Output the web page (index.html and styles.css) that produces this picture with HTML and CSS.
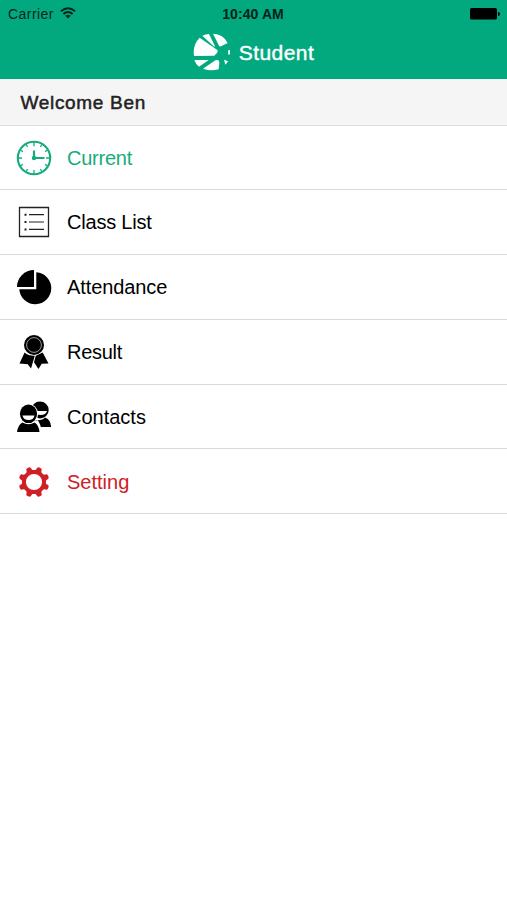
FILE: index.html
```html
<!DOCTYPE html>
<html lang="en">
<head>
<meta charset="utf-8">
<title>Student</title>
<link rel="stylesheet" href="styles.css">
</head>
<body>
<header class="header">
  <div class="status">
    <div class="status-left"><span class="carrier">Carrier</span>
      <svg class="wifi" width="16" height="12" viewBox="0 0 16 12" fill="none" stroke="#05261b" stroke-width="1.9"><path d="M1 4.2Q8-1.8 15 4.2M3.4 7Q8 3 12.6 7"/><path d="M8 11.5 5.2 8.8Q8 6.5 10.8 8.8Z" fill="#05261b" stroke="none"/></svg>
    </div>
    <span class="time">10:40 AM</span>
    <svg class="battery" width="30" height="12" viewBox="0 0 30 12"><rect width="27" height="11.5" rx="1.5"/><path d="M28 4q2 0 2 2t-2 2z"/></svg>
  </div>
  <div class="brand">
    <svg width="38" height="38" viewBox="39 99 114 114" fill="#fff"><path d="M59 113 112 150Q115 154 110 160L103 167 42 168Q37 135 59 113Z"/><path d="M67 107Q77 102 87 102L105 139Q104 141 100 138Z"/><path d="M99 101Q130 102 143 129L123 139Q118 141 116 135Z"/><path d="M43 180H86L57 200Q47 192 43 180Z"/><path d="M69 206 106 181Q118 177 118 188L116 208Q91 215 69 206Z"/><path d="M132 179 144 184Q140 191 136 194ZM144 152 150 149V163L145 164Z"/></svg>
    <h1 class="title">Student</h1>
  </div>
</header>
<div class="welcome"><span class="welcome-text">Welcome Ben</span></div>
<ul class="menu">
  <li class="row current">
    <svg class="icon" viewBox="0 0 36 36" fill="none" stroke="currentColor"><circle cx="18" cy="18" r="16.2" stroke-width="2.1"/><path stroke-width="1.3" d="M18 2v4.2M18 30v4M2 18h4M30 18h4M10 4.2l1.6 2.8M26 4.2 24.4 7M10 31.8l1.6-2.8M26 31.8 24.4 29M4.2 10l2.8 1.6M31.8 10 29 11.6M4.2 26 7 24.4M31.8 26 29 24.4"/><path stroke-width="2.2" d="M18 10.5V18h10.5"/><circle cx="18" cy="18" r="2.2" fill="currentColor" stroke="none"/></svg>
    <span class="label l1">Current</span></li>
  <li class="row">
    <svg class="icon" viewBox="0 0 36 36" fill="none" stroke="#222"><path stroke-width="1.3" d="M3.5 3.5h29v29h-29z"/><path stroke-width="1.2" d="M13 10.7h15M13 18h15M13 25.4h15"/><path stroke-width="2" d="M8.5 10.7h2M8.5 18h2M8.5 25.4h2"/></svg>
    <span class="label l2">Class List</span></li>
  <li class="row">
    <svg class="icon" viewBox="0 0 36 36" fill="currentColor"><path d="M18 18H1A17 17 0 0 1 18 1Z"/><path d="M20.3 3.3A16 16 0 1 1 3.3 20.3H20.3Z"/></svg>
    <span class="label l3">Attendance</span></li>
  <li class="row">
    <svg class="icon" viewBox="0 0 36 36" fill="currentColor"><path d="M8.6 18.5Q12.5 22 18.8 21.8L15 34.5 11.8 30.2 3.5 29.5ZM19.8 21.8 26.7 18.5 32.5 29.5 25.8 29.7 22.4 35 18 28.3Z"/><circle cx="18" cy="11" r="10"/><circle cx="18" cy="11" r="7.4" fill="none" stroke="#aaa" stroke-width=".9"/></svg>
    <span class="label l4">Result</span></li>
  <li class="row">
    <svg class="icon" viewBox="0 0 36 36" fill="currentColor"><ellipse cx="24" cy="11" rx="8.7" ry="8.5"/><path d="M18 12H31Q30 16 24.5 16 20 16 18 12Z" fill="#fff"/><path d="M19 21Q26 22 29 18.5 34.5 20 35.2 28H22Z"/><ellipse cx="12.5" cy="15" rx="9.6" ry="10.2" fill="#fff"/><path d="M4 21Q13 27 21.5 21 25 25 26 34H-1Z" fill="#fff"/><ellipse cx="12.5" cy="14.8" rx="8.6" ry="9.3"/><path d="M6.5 16.5H18.5Q17.5 21 12.5 21 7.5 21 6.5 16.5Z" fill="#fff"/><path d="M6.2 23.5Q12.5 27 18.8 23.5 23 26.5 23.5 33H1Q1.7 26.5 6.2 23.5Z"/></svg>
    <span class="label l5">Contacts</span></li>
  <li class="row setting">
    <svg class="icon" viewBox="-18 -18 36 36" fill="currentColor"><circle r="10" fill="none" stroke="currentColor" stroke-width="3.8"/><g transform="rotate(22.5)"><path id="tooth" d="M-4.6-10.4Q-2.3-11.8-2.5-14.2-2.2-15.5 0-15.5T2.5-14.2Q2.3-11.8 4.6-10.4Z"/><use href="#tooth" transform="rotate(45)"/><use href="#tooth" transform="rotate(90)"/><use href="#tooth" transform="rotate(135)"/><use href="#tooth" transform="rotate(180)"/><use href="#tooth" transform="rotate(225)"/><use href="#tooth" transform="rotate(270)"/><use href="#tooth" transform="rotate(315)"/></g></svg>
    <span class="label l6">Setting</span></li>
</ul>
</body>
</html>
```
FILE: styles.css
```css
* { box-sizing: border-box; }
body {
  margin: 0;
  background: #fff;
  color: #000;
  font-family: "Liberation Sans", Arial, sans-serif;
}
.header {
  height: 79px;
  background: #02a97f;
}
.status {
  display: grid;
  grid-template-columns: 1fr auto 1fr;
  align-items: center;
  height: 28px;
  padding: 0 7px 0 8px;
  font-size: 14px;
  color: #05261b;
}
.status-left { display: flex; align-items: center; gap: 6px; }
.carrier { letter-spacing: 0.45px; }
.wifi { margin-top: -2px; }
.time {
  margin-right: 2px;
  font-weight: bold;
  letter-spacing: 0.1px;
  color: #032219;
}
.battery { justify-self: end; }
.brand {
  display: flex;
  align-items: center;
  justify-content: center;
  gap: 8px;
  height: 48px;
}
.title {
  margin: 0;
  padding-top: 1px;
  color: #fff;
  font-size: 21px;
  font-weight: normal;
  letter-spacing: 0.45px;
  -webkit-text-stroke: 0.4px #fff;
}
.welcome {
  display: flex;
  align-items: center;
  height: 46.5px;
  padding: 3px 0 0 20.5px;
  background: #f5f5f5;
  border-bottom: 1px solid #dedede;
}
.welcome-text {
  font-size: 19px;
  letter-spacing: 0.68px;
  color: #222;
  -webkit-text-stroke: 0.5px #222;
}
.menu { margin: 0; padding: 0; list-style: none; }
.row {
  display: flex;
  align-items: center;
  gap: 15px;
  height: 64.8px;
  padding: 0.6px 0 0 16px;
  border-bottom: 1px solid #dadada;
}
.icon { width: 36px; height: 36px; }
.label { font-size: 20px; line-height: 24px; }
.l1 { letter-spacing: -0.25px; }
.l2 { letter-spacing: -0.2px; }
.l3 { letter-spacing: -0.1px; }
.l4 { letter-spacing: -0.3px; }
.current { color: #16ab7e; }
.setting { color: #cf2027; }
```
